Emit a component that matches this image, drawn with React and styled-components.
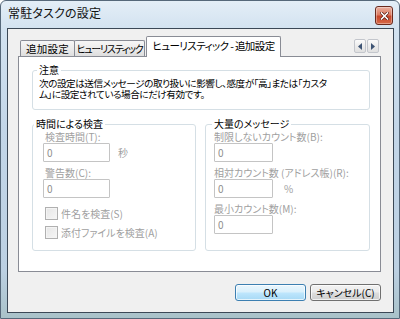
import React from 'react';
import styled, { createGlobalStyle } from 'styled-components';

const FONT = `"Noto Sans CJK JP", "Noto Sans", sans-serif`;

const Global = createGlobalStyle`
  html, body { margin: 0; padding: 0; width: 400px; height: 319px; overflow: hidden; background: #fff; }
  body { font-family: ${FONT}; }
  * { box-sizing: border-box; }
`;

const Window = styled.div`
  width: 400px;
  height: 319px;
  display: flex;
  flex-direction: column;
  border: 1px solid #56687a;
  border-radius: 6px 6px 0 0;
  background: linear-gradient(180deg, #e4eef7 0%, #d2e2f0 9%, #c3d6e8 40%, #bcd0e2 85%, #a9c2c9 100%);
  font-family: ${FONT};
  font-feature-settings: "palt";
`;

const TitleBar = styled.div`
  height: 27px;
  flex: none;
  display: flex;
  align-items: flex-start;
  justify-content: space-between;
  padding: 0 6px 0 7px;
`;

const Title = styled.div`
  font-size: 12px;
  line-height: 14px;
  margin-top: 5px;
  color: #111;
  letter-spacing: 0.2px;
`;

const CloseButton = styled.div`
  width: 18px;
  height: 19px;
  margin-top: 5px;
  border: 1px solid #6a2a1e;
  border-radius: 3px;
  background: linear-gradient(180deg, #eab0a0 0%, #dc7c62 45%, #c8462a 55%, #d66a48 100%);
  display: flex;
  align-items: center;
  justify-content: center;
  box-shadow: inset 0 0 0 1px rgba(255, 255, 255, 0.35);
`;

const Client = styled.div`
  flex: 1;
  margin: 0 5px 5px 6px;
  border: 1px solid #3b4856;
  background: #f0f0f0;
  display: flex;
  flex-direction: column;
  padding: 7px 12px 11px 10px;
`;

const TabStrip = styled.div`
  height: 20px;
  flex: none;
  display: flex;
  align-items: flex-end;
  padding-left: 2px;
`;

const Tab = styled.div`
  position: relative;
  z-index: ${(p) => (p.$active ? 2 : 1)};
  width: ${(p) => p.$w}px;
  margin-left: ${(p) => p.$ml || 0}px;
  height: ${(p) => (p.$active ? 21 : 16)}px;
  margin-bottom: ${(p) => (p.$active ? -1 : 0)}px;
  padding-bottom: ${(p) => (p.$active ? 2 : 0)}px;
  border: 1px solid #898c95;
  border-bottom: none;
  border-radius: 2px 2px 0 0;
  background: ${(p) => (p.$active ? '#fff' : 'linear-gradient(180deg, #f6f6f6 0%, #ececec 50%, #dedede 100%)')};
  display: flex;
  align-items: center;
  justify-content: center;
  font-size: ${(p) => p.$fs || 10.5}px;
  line-height: 12px;
  color: #000;
  white-space: nowrap;
  letter-spacing: ${(p) => p.$ls || 0}px;
`;

const Arrows = styled.div`
  margin-left: auto;
  margin-right: 2px;
  align-self: flex-start;
  margin-top: 3px;
  display: flex;
  gap: 1px;
`;

const ArrowBtn = styled.div`
  width: 12px;
  height: 14px;
  border: 1px solid #c3c6cc;
  border-radius: 2px;
  background: linear-gradient(180deg, #fbfbfb 0%, #ececec 50%, #e0e0e0 100%);
  display: flex;
  align-items: center;
  justify-content: center;
`;

const Panel = styled.div`
  height: 216px;
  flex: none;
  background: #fff;
  border: 1px solid #898c95;
  padding: 7px 0 0 13px;
  display: flex;
  flex-direction: column;
`;

const Group = styled.fieldset`
  margin: 0;
  padding: 0;
  border: 1px solid #d5dfe5;
  border-radius: 3px;
  min-width: 0;
  width: ${(p) => (p.$w ? `${p.$w}px` : 'auto')};
`;

const Legend = styled.legend`
  margin-left: ${(p) => p.$ml || 0}px;
  padding: 0 2px;
  font-size: 10px;
  line-height: 12px;
  color: #000;
`;

const NoticeText = styled.div`
  padding: 2px 0 9px 6px;
  font-size: 9.6px;
  line-height: 11px;
  color: #000;
  white-space: nowrap;
  letter-spacing: -0.45px;
`;

const Columns = styled.div`
  margin-top: 8px;
  display: grid;
  grid-template-columns: 164px 165px;
  column-gap: 9px;
  height: 133px;
`;

const GroupBody = styled.div`
  display: flex;
  flex-direction: column;
  align-items: flex-start;
  padding-top: 1px;
  padding-left: ${(p) => p.$pl}px;
`;

const FieldLabel = styled.div`
  font-size: 10px;
  line-height: 12px;
  color: #a0a0a0;
  margin-left: ${(p) => p.$ml || 0}px;
  white-space: nowrap;
`;

const InputRow = styled.div`
  display: flex;
  align-items: center;
  margin-bottom: 5px;
`;

const TextBox = styled.div`
  width: ${(p) => p.$w}px;
  height: 19px;
  border: 1px solid #c4c4c4;
  border-radius: 1px;
  background: #fff;
  padding-left: 3px;
  display: flex;
  align-items: center;
  font-size: 10px;
  color: #8e8e8e;
`;

const Unit = styled.span`
  margin-left: ${(p) => p.$ml}px;
  font-size: 10px;
  color: #a0a0a0;
`;

const CheckRow = styled.div`
  display: flex;
  align-items: center;
  gap: 3px;
  margin-left: 2px;
  margin-top: ${(p) => p.$mt}px;
  height: 13px;
`;

const CheckBox = styled.div`
  width: 13px;
  height: 13px;
  border: 1px solid #b0b0b0;
  background: linear-gradient(135deg, #e6e6e6 0%, #f6f6f6 100%);
  box-shadow: inset 0 0 0 1px #f4f4f4;
`;

const CheckLabel = styled.span`
  font-size: 10px;
  line-height: 12px;
  color: #a0a0a0;
  white-space: nowrap;
`;

const ButtonRow = styled.div`
  margin-top: 12px;
  display: flex;
  justify-content: flex-end;
  gap: 4px;
`;

const Button = styled.div`
  width: 71px;
  height: 17px;
  border-radius: 3px;
  border: 1px solid ${(p) => (p.$default ? '#3c7fb1' : '#707070')};
  background: ${(p) =>
    p.$default
      ? 'linear-gradient(180deg, #eaf6fd 0%, #d9f0fc 48%, #bee6fd 52%, #a7d9f5 100%)'
      : 'linear-gradient(180deg, #f2f2f2 0%, #ebebeb 48%, #dddddd 52%, #cfcfcf 100%)'};
  box-shadow: inset 0 0 0 1px rgba(255, 255, 255, 0.7);
  display: flex;
  align-items: center;
  justify-content: center;
  font-size: 10px;
  color: #000;
`;

function Arrow({ dir }) {
  return (
    <svg width="4" height="7" viewBox="0 0 4 7">
      {dir === 'left' ? <polygon points="4,0 4,7 0,3.5" fill="#3e5474" /> : <polygon points="0,0 0,7 4,3.5" fill="#3e5474" />}
    </svg>
  );
}

export default function App() {
  return (
    <>
      <Global />
      <Window>
        <TitleBar>
          <Title>常駐タスクの設定</Title>
          <CloseButton>
            <svg width="9" height="8" viewBox="0 0 9 8">
              <path d="M1.5 1 L7.5 7 M7.5 1 L1.5 7" stroke="#5a1a10" strokeWidth="3" strokeLinecap="square" />
              <path d="M1.5 1 L7.5 7 M7.5 1 L1.5 7" stroke="#ffffff" strokeWidth="1.6" strokeLinecap="square" />
            </svg>
          </CloseButton>
        </TitleBar>
        <Client>
          <TabStrip>
            <Tab $w={55} $ls={0.3}>追加設定</Tab>
            <Tab $w={71} $ml={-1} $fs={10} $ls={-1.3}>ヒューリスティック</Tab>
            <Tab $w={135} $ml={1} $active $ls={-0.6}>ヒューリスティック - 追加設定</Tab>
            <Arrows>
              <ArrowBtn><Arrow dir="left" /></ArrowBtn>
              <ArrowBtn><Arrow dir="right" /></ArrowBtn>
            </Arrows>
          </TabStrip>
          <Panel>
            <Group $w={338}>
              <Legend $ml={4}>注意</Legend>
              <NoticeText>
                次の設定は送信メッセージの取り扱いに影響し、感度が「高」または「カスタ
                <br />
                ム」に設定されている場合にだけ有効です。
              </NoticeText>
            </Group>
            <Columns>
              <Group>
                <Legend $ml={1}>時間による検査</Legend>
                <GroupBody $pl={10}>
                  <FieldLabel $ml={2}>検査時間(T):</FieldLabel>
                  <InputRow>
                    <TextBox $w={67}>0</TextBox>
                    <Unit $ml={8}>秒</Unit>
                  </InputRow>
                  <FieldLabel $ml={2}>警告数(C):</FieldLabel>
                  <InputRow>
                    <TextBox $w={67}>0</TextBox>
                  </InputRow>
                  <CheckRow $mt={4}>
                    <CheckBox />
                    <CheckLabel>件名を検査(S)</CheckLabel>
                  </CheckRow>
                  <CheckRow $mt={6}>
                    <CheckBox />
                    <CheckLabel>添付ファイルを検査(A)</CheckLabel>
                  </CheckRow>
                </GroupBody>
              </Group>
              <Group>
                <Legend $ml={6}>大量のメッセージ</Legend>
                <GroupBody $pl={8}>
                  <FieldLabel>制限しないカウント数(B):</FieldLabel>
                  <InputRow>
                    <TextBox $w={59}>0</TextBox>
                  </InputRow>
                  <FieldLabel>相対カウント数 (アドレス帳)(R):</FieldLabel>
                  <InputRow>
                    <TextBox $w={59}>0</TextBox>
                    <Unit $ml={11}>%</Unit>
                  </InputRow>
                  <FieldLabel>最小カウント数(M):</FieldLabel>
                  <InputRow>
                    <TextBox $w={59}>0</TextBox>
                  </InputRow>
                </GroupBody>
              </Group>
            </Columns>
          </Panel>
          <ButtonRow>
            <Button $default>OK</Button>
            <Button>キャンセル(C)</Button>
          </ButtonRow>
        </Client>
      </Window>
    </>
  );
}
